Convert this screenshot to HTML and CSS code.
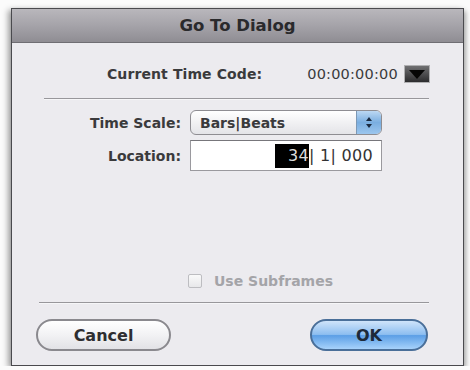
FILE: index.html
```html
<!DOCTYPE html>
<html lang="en">
<head>
  <meta charset="UTF-8" />
  <title>Go To Dialog</title>
  <link rel="stylesheet" href="styles.css">
</head>
<body>
  <div class="dialog">
    <div class="titlebar">Go To Dialog</div>

    <div class="content">
      <div class="tc-row">
        <span class="tc-label">Current Time Code:</span>
        <span class="tc-value">00:00:00:00</span>
        <span class="tc-menu"><span class="arrow"></span></span>
      </div>

      <div class="sep top"></div>

      <div class="form">
        <label>Time Scale:</label>
        <div class="select">
          <span>Bars|Beats</span>
          <span class="stepper">
            <span class="up"></span>
            <span class="down"></span>
          </span>
        </div>

        <label>Location:</label>
        <div class="location"><span class="sel">34</span>| 1| 000</div>
      </div>

      <div class="check-row">
        <span class="checkbox"></span>
        <span>Use Subframes</span>
      </div>

      <div class="sep bottom"></div>

      <div class="buttons">
        <button class="btn cancel">Cancel</button>
        <button class="btn ok">OK</button>
      </div>
    </div>
  </div>
</body>
</html>
```

FILE: styles.css
```css
* {
  box-sizing: border-box;
}

body {
  margin: 0;
  background: #fbfbfb;
  font-family: "DejaVu Sans", "Liberation Sans", sans-serif;
  color: #3a3a3c;
}

.dialog {
  margin: 8px 0 0 11px;
  width: 453px;
  height: 358px;
  border: 1px solid #4a4a4e;
  box-shadow: -3px 2px 6px rgba(0, 0, 0, 0.35), 2px 3px 5px rgba(0, 0, 0, 0.3);
  background: #ecebef;
  display: flex;
  flex-direction: column;
}

/* Barra de título */
.titlebar {
  height: 34px;
  background: linear-gradient(#b9b7bc, #a5a3a9 50%, #8f8d93);
  border-bottom: 1px solid #6f6e73;
  text-align: center;
  font-weight: bold;
  font-size: 16.5px;
  line-height: 33px;
  color: #2a2a2c;
}

.content {
  flex: 1;
  display: flex;
  flex-direction: column;
}

/* Time code atual */
.tc-row {
  margin-top: 21px;
  height: 20px;
  display: flex;
  align-items: center;
  font-size: 14px;
  font-weight: bold;
}

.tc-label {
  margin-left: 95px;
  letter-spacing: 0.1px;
}

.tc-value {
  margin-left: 45px;
  font-weight: normal;
  font-size: 14.5px;
  letter-spacing: 0.2px;
}

.tc-menu {
  margin-left: 6px;
  width: 26px;
  height: 18px;
  background: linear-gradient(#707072, #2c2c2e);
  border: 1px solid #b0b0b2;
  display: flex;
  align-items: center;
  justify-content: center;
}

.tc-menu .arrow {
  width: 0;
  height: 0;
  border-left: 8px solid transparent;
  border-right: 8px solid transparent;
  border-top: 9px solid #050505;
}

/* Separadores */
.sep {
  height: 2px;
  background: #98979b;
  border-bottom: 1px solid #f6f6f8;
}

.sep.top {
  margin: 14px 34px 0 32px;
}

.sep.bottom {
  margin: 12px 34px 0 27px;
}

/* Formulário */
.form {
  margin-top: 10px;
  display: grid;
  grid-template-columns: 169px 192px;
  column-gap: 9px;
  row-gap: 5px;
  align-items: center;
}

.form label {
  text-align: right;
  font-size: 14px;
  font-weight: bold;
}

.select {
  height: 25px;
  border: 1px solid #8e8d92;
  border-radius: 6px;
  background: linear-gradient(#ffffff, #f1f1f3 50%, #e4e4e8);
  display: flex;
  align-items: center;
  justify-content: space-between;
  padding-left: 9px;
  font-size: 14px;
  font-weight: bold;
  overflow: hidden;
}

.stepper {
  width: 25px;
  height: 100%;
  background: linear-gradient(#bcd8f3, #7aaee0 50%, #9cc6ee);
  border-left: 1px solid #7c98b5;
  display: flex;
  flex-direction: column;
  align-items: center;
  justify-content: center;
  gap: 3px;
}

.stepper .up,
.stepper .down {
  width: 0;
  height: 0;
  border-left: 3px solid transparent;
  border-right: 3px solid transparent;
}

.stepper .up {
  border-bottom: 4px solid #1a2a40;
}

.stepper .down {
  border-top: 4px solid #1a2a40;
}

.location {
  height: 31px;
  background: #fff;
  border: 1px solid #9a999e;
  border-top-color: #77767b;
  text-align: right;
  padding-right: 8px;
  font-size: 16px;
  line-height: 29px;
  letter-spacing: 0.3px;
  color: #333;
}

.location .sel {
  background: #000;
  color: #ddd;
  padding: 2px 0 3px 13px;
}

/* Checkbox */
.check-row {
  margin-top: 101px;
  height: 18px;
  display: flex;
  align-items: center;
  gap: 12px;
  padding-left: 176px;
  font-size: 14px;
  font-weight: bold;
  color: #a4a4a8;
}

.checkbox {
  width: 14px;
  height: 14px;
  border: 1px solid #bdbdc1;
  border-radius: 2px;
  background: linear-gradient(#fafafa, #e8e8ea);
}

/* Botões */
.buttons {
  margin-top: 15px;
  display: flex;
  justify-content: space-between;
  padding: 0 35px 0 24px;
}

.btn {
  height: 32px;
  border-radius: 16px;
  font-family: inherit;
  font-size: 16px;
  font-weight: bold;
  color: #2e2e30;
  cursor: pointer;
}

.btn.cancel {
  width: 135px;
  border: 2px solid #8a898e;
  background: linear-gradient(#ffffff, #f2f2f4 50%, #e2e2e6);
}

.btn.ok {
  width: 118px;
  border: 2px solid #4a6f99;
  background: linear-gradient(#cfe4fa, #8dbef0 48%, #5c9fe6 52%, #a7d2fb);
  color: #1d2a3a;
}
```
